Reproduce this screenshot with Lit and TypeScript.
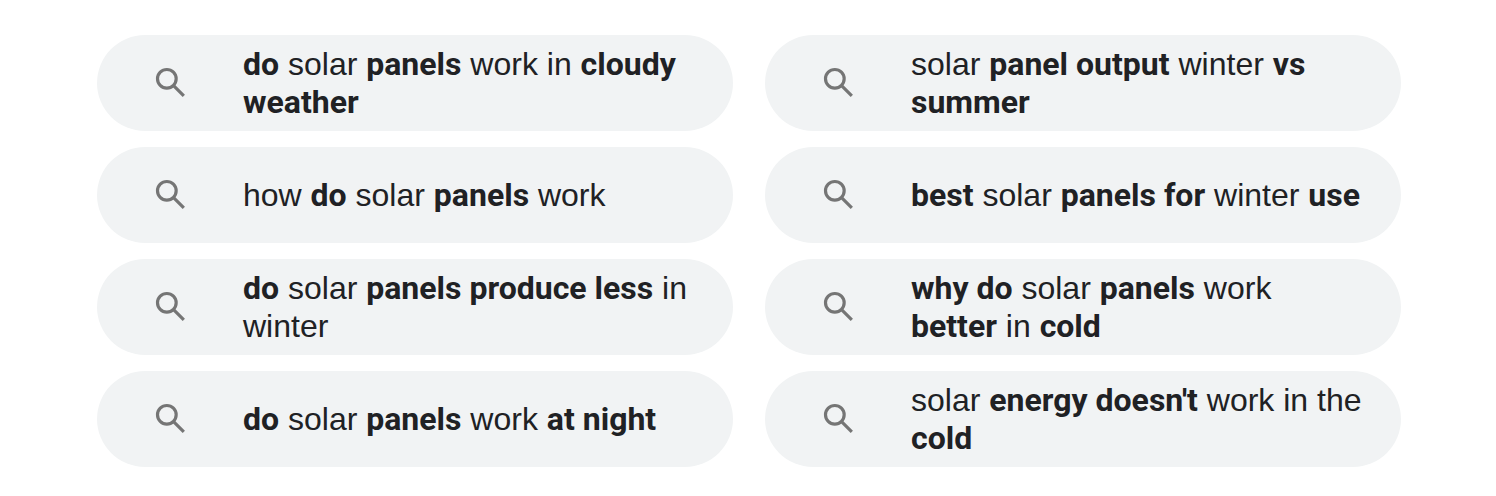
import { LitElement, html, css } from "lit";
import { customElement } from "lit/decorators.js";

type Part = { text: string; bold: boolean };

// Text between asterisks is emphasised.
const parse = (s: string): Part[] =>
  s
    .split("*")
    .map((text, i) => ({ text, bold: i % 2 === 1 }))
    .filter((p) => p.text !== "");

const SEARCHES = [
  "*do* solar *panels* work in *cloudy weather*",
  "solar *panel output* winter *vs summer*",
  "how *do* solar *panels* work",
  "*best* solar *panels for* winter *use*",
  "*do* solar *panels produce less* in winter",
  "*why do* solar *panels* work *better* in *cold*",
  "*do* solar *panels* work *at night*",
  "solar *energy doesn't* work in the *cold*",
];

@customElement("app-root")
export class AppRoot extends LitElement {
  static styles = css`
    :host {
      display: block;
      background: #fff;
      padding: 35px 95px 29px 97px;
    }
    .grid {
      display: grid;
      grid-template-columns: repeat(2, minmax(0, 1fr));
      gap: 16px 32px;
    }
    .pill {
      box-sizing: border-box;
      display: flex;
      align-items: center;
      min-height: 96px;
      padding: 0 38px 0 54px;
      border-radius: 48px;
      background: #f1f3f4;
      color: #202124;
      font-family: "Liberation Sans", Arial, sans-serif;
      font-size: 32px;
      line-height: 38px;
      text-decoration: none;
    }
    .icon {
      flex: none;
      width: 40px;
      height: 40px;
      margin-right: 52px;
      fill: none;
      stroke: #757575;
      stroke-width: 1.9;
    }
    b {
      font-family: Roboto, sans-serif;
      font-weight: 700;
    }
  `;

  render() {
    return html`<nav class="grid" aria-label="Related searches">
      ${SEARCHES.map(
        (s) => html`<a class="pill" href="#">
          <svg class="icon" viewBox="0 0 24 24" aria-hidden="true">
            <circle cx="9.5" cy="9.5" r="5.6" />
            <path d="M13.4 13.4L19.7 19.7" />
          </svg>
          <span>${parse(s).map((p) => (p.bold ? html`<b>${p.text}</b>` : p.text))}</span>
        </a>`
      )}
    </nav>`;
  }
}
